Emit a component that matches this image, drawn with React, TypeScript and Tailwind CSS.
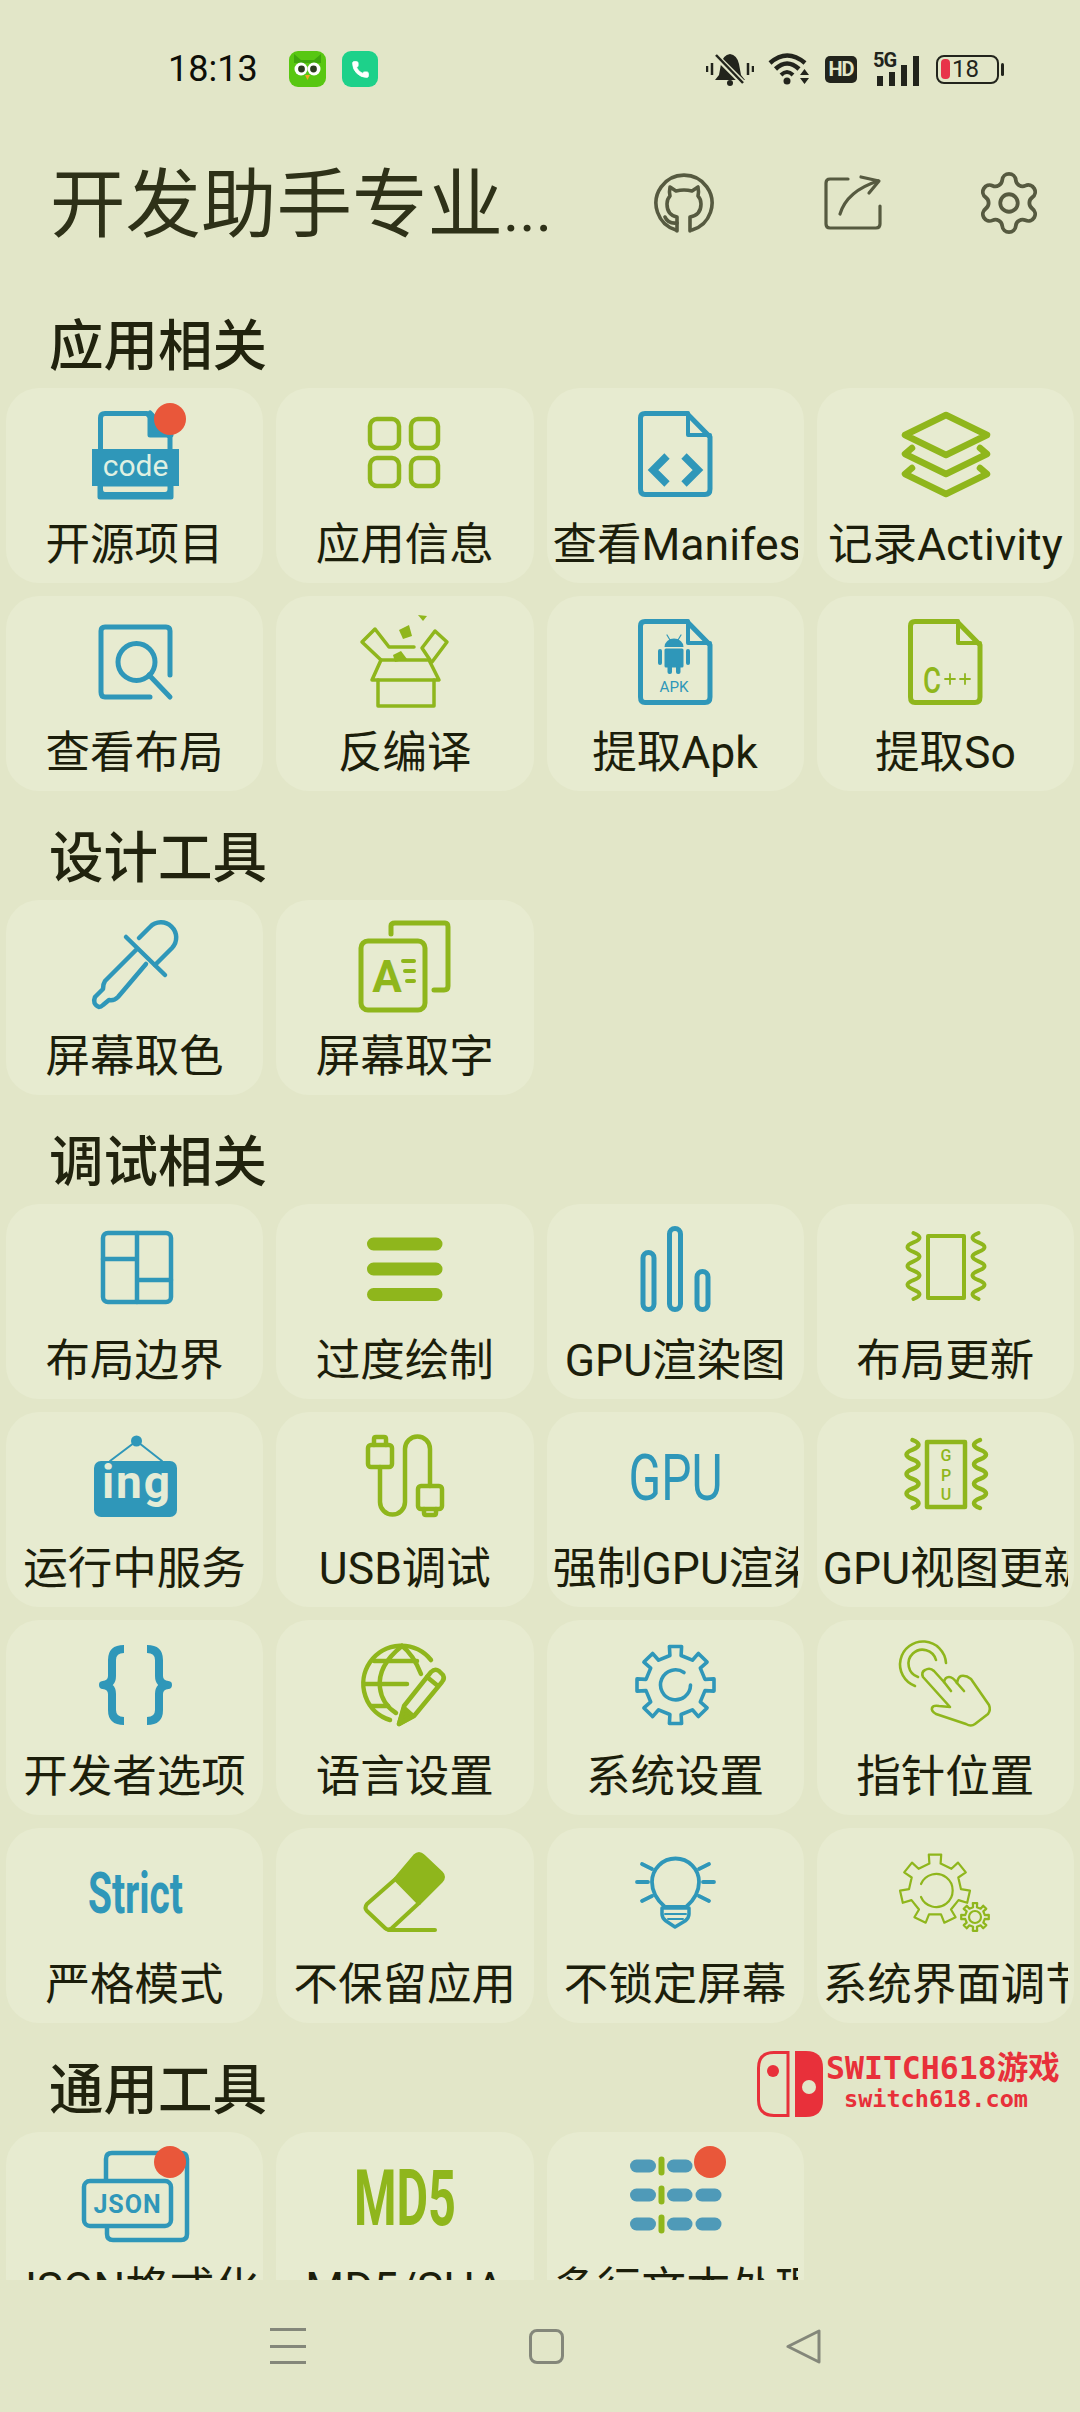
import React from "react";
import { Settings, Phone } from "lucide-react";

const B = "#2f97b9";
const G = "#8fb61c";
const R = "#e9573a";

function gearPath(cx: number, cy: number, ro: number, ri: number, n: number) {
  const pts: string[] = [];
  const step = (Math.PI * 2) / n;
  for (let i = 0; i < n; i++) {
    const a = i * step - Math.PI / 2;
    const w = step * 0.2;
    const w2 = step * 0.24;
    const p = (r: number, t: number) => `${(cx + r * Math.cos(t)).toFixed(1)} ${(cy + r * Math.sin(t)).toFixed(1)}`;
    pts.push(p(ri, a - w2), p(ro, a - w), p(ro, a + w), p(ri, a + w2));
  }
  return "M" + pts.join(" L") + " Z";
}

function wavePath(x: number, y0: number, y1: number, amp: number, n: number, flip = false) {
  const h = (y1 - y0) / n;
  let d = `M${x} ${y0}`;
  for (let i = 0; i < n; i++) {
    const s = (i % 2 === 0 ? 1 : -1) * (flip ? -1 : 1);
    d += ` Q${x + s * amp * 2} ${y0 + h * (i + 0.5)} ${x} ${y0 + h * (i + 1)}`;
  }
  return d;
}

function Ico({ children, color, sw = 5 }: { children: React.ReactNode; color: string; sw?: number }) {
  return (
    <svg viewBox="0 0 100 100" fill="none" stroke={color} strokeWidth={sw} strokeLinecap="round" strokeLinejoin="round" className="w-[100px] h-[100px] overflow-visible shrink-0">
      {children}
    </svg>
  );
}

const Dot = ({ y = 15 }: { y?: number }) => <circle cx="85" cy={y} r="16" fill={R} stroke="none" />;
const T = (p: React.SVGProps<SVGTextElement>) => <text stroke="none" {...p} />;

const FILE = "M20 9.5 H62 L85 33 V85 Q85 90.5 80 90.5 H20 Q15.5 90.5 15.5 85 V14 Q15.5 9.5 20 9.5 Z";

const IconCode = () => (
  <Ico color={B}>
    <path d={FILE} strokeLinejoin="round" />
    <path d="M65 9 V31 H86 L65 9Z" fill={B} />
    <rect x="7" y="45" width="87" height="37" fill={B} stroke="none" />
    <rect x="15" y="80" width="71" height="13" fill="none" strokeWidth="5" strokeLinecap="butt" />
    <T x="50.5" y="71.5" fontSize="30" fill="#dff0e2" textAnchor="middle" fontFamily="Roboto">code</T>
    <Dot />
  </Ico>
);
const IconApps = () => (
  <Ico color={G} sw={4.5}>
    <rect x="15" y="15" width="29" height="29" rx="7" />
    <rect x="56" y="15" width="27" height="29" rx="7" />
    <rect x="15" y="54" width="29" height="28" rx="7" />
    <rect x="56" y="54" width="27" height="28" rx="7" />
  </Ico>
);
const IconManifest = () => (
  <Ico color={B}>
    <path d={FILE} />
    <path d="M63 9 V31 H85" strokeWidth="4" />
    <path d="M42 52 L28 66 L42 80" strokeWidth="7.5" strokeLinecap="butt" strokeLinejoin="miter" />
    <path d="M59 52 L73 66 L59 80" strokeWidth="7.5" strokeLinecap="butt" strokeLinejoin="miter" />
  </Ico>
);
const IconLayers = () => (
  <Ico color={G} sw={6.5}>
    <path d="M51 11 L92 31 L51 51 L10 31 Z" />
    <path d="M17 44 L10 50 L51 70 L92 50 L85 44" />
    <path d="M17 64 L10 70 L51 90 L92 70 L85 64" />
  </Ico>
);
const IconSearch = () => (
  <Ico color={B} sw={5}>
    <path d="M85 63 V19 Q85 15 81 15 H20 Q16 15 16 19 V80 Q16 85 20 85 H65" />
    <circle cx="51.5" cy="50" r="18.5" />
    <path d="M64 63 L85 85" />
  </Ico>
);
const IconBox = () => (
  <Ico color={G} sw={3.5}>
    <path d="M23 68 V94 H79 V68" />
    <path d="M26 48 H74 L84 68 H17 Z" />
    <path d="M26 48 L7 30 L20 17 L34 35 H59" />
    <path d="M75 48 L67 36 L80 19 L92 30 L77 50" />
    <polygon points="44,18 54,13 57,24 48,27" fill={G} stroke="none" />
    <polygon points="63,3 72,4 68,9" fill={G} stroke="none" />
    <polygon points="38,43 46,39 52,47 40,50" fill={G} stroke="none" />
  </Ico>
);
const IconApk = () => (
  <Ico color={B}>
    <path d={FILE} />
    <path d="M63 9 V31 H85" strokeWidth="4" />
    <g fill={B} stroke="none">
      <path d="M39.5 35 A9.5 8.5 0 0 1 58.5 35 Z" />
      <rect x="39.5" y="36.5" width="19" height="19" rx="1.5" />
      <rect x="33" y="37" width="4" height="16" rx="2" />
      <rect x="61" y="37" width="4" height="16" rx="2" />
      <rect x="42.5" y="52" width="4.5" height="10" rx="2" />
      <rect x="51" y="52" width="4.5" height="10" rx="2" />
    </g>
    <path d="M42 23 L45 28 M56 23 L53 28" strokeWidth="1.2" />
    <T x="49" y="80" fontSize="14" fill={B} textAnchor="middle" fontFamily="Roboto" textLength="29" lengthAdjust="spacingAndGlyphs">APK</T>
  </Ico>
);
const IconSo = () => (
  <Ico color={G}>
    <path d={FILE} />
    <path d="M63 9 V31 H85" strokeWidth="4" />
    <T x="28" y="81" fontSize="36" fill={G} fontFamily="Roboto" fontWeight="500" textLength="18" lengthAdjust="spacingAndGlyphs">C</T>
    <path d="M50 67 H60 M55 62 V72 M65 67 H75 M70 62 V72" strokeWidth="1.8" />
  </Ico>
);
const IconDropper = () => (
  <Ico color={B} sw={4.5}>
    <path d="M41 21 L80 59" />
    <path d="M54 22 L65 11 A14.5 14.5 0 0 1 87 32 L70 49" />
    <path d="M52 33 L20 65 Q18 68 18 73 L10 81 Q7 88 14 91 Q16 91 18 89 L24 84 Q29 85 33 81 L61 48" />
  </Ico>
);
const IconCopy = () => (
  <Ico color={G} sw={5}>
    <path d="M36 18 V10 Q36 7 40 7 H90 Q93 7 93 11 V70 Q93 74 89 74 H79" />
    <rect x="6" y="25" width="64" height="69" rx="7" />
    <T x="32" y="76" fontSize="44" fontWeight="700" fill={G} textAnchor="middle" fontFamily="Roboto">A</T>
    <path d="M48 45 H59 M50 55 H59 M52 65 H59" strokeWidth="4" />
  </Ico>
);
const IconBounds = () => (
  <Ico color={B} sw={4.5}>
    <rect x="18" y="13" width="68" height="69" rx="5" />
    <path d="M52 13 V82 M18 39 H52 M52 60 H86" />
  </Ico>
);
const IconOverdraw = () => (
  <Ico color={G} sw={13}>
    <path d="M18.5 24 H81 M18.5 49 H81 M18.5 74.5 H81" />
  </Ico>
);
const IconBars = () => (
  <Ico color={B} sw={5}>
    <rect x="18" y="32.5" width="11" height="57" rx="5.5" />
    <rect x="44.5" y="8.5" width="11" height="81" rx="5.5" />
    <rect x="72" y="51.5" width="11" height="38" rx="5.5" />
  </Ico>
);
const Waves = ({ lx, rx, y0, y1 }: { lx: number; rx: number; y0: number; y1: number }) => (
  <>
    <path d={wavePath(lx, y0, y1, 6, 7)} />
    <path d={wavePath(rx, y0, y1, 6, 7, true)} />
  </>
);
const IconLayoutUpdate = () => (
  <Ico color={G} sw={4}>
    <rect x="33" y="16" width="36" height="62" />
    <Waves lx={18.5} rx={83.5} y0={13} y1={79} />
  </Ico>
);
const IconGpuText = () => (
  <Ico color={B}>
    <T x="3.5" y="72" fontSize="65" fill={B} fontFamily="Roboto" fontWeight="400" textLength="94" lengthAdjust="spacingAndGlyphs">GPU</T>
  </Ico>
);
const IconGpuChip = () => (
  <Ico color={G} sw={4.5}>
    <rect x="32" y="14" width="38" height="65" />
    <Waves lx={17.5} rx={85} y0={12} y1={80} />
    <g fontFamily="Roboto" fontSize="16" fontWeight="500" textAnchor="middle" fill={G}>
      <T x="51" y="32.5">G</T>
      <T x="51" y="52.5">P</T>
      <T x="51" y="72">U</T>
    </g>
  </Ico>
);
const IconIng = () => (
  <Ico color={B} sw={2}>
    <path d="M25 33 L51.5 13 L77 33" />
    <circle cx="51.5" cy="13" r="5.5" fill={B} stroke="none" />
    <rect x="9" y="33" width="83" height="56" rx="7" fill={B} stroke="none" />
    <T x="52" y="70" fontSize="46" fontWeight="700" fill="#e4ecd6" textAnchor="middle" fontFamily="Roboto" letterSpacing="2">ing</T>
  </Ico>
);
const IconUsb = () => (
  <Ico color={G} sw={4.5}>
    <rect x="13" y="17" width="24" height="22" rx="3" />
    <path d="M19 17 V11 Q19 9 21 9 H29 Q31 9 31 11 V17" />
    <path d="M25 39 V74 a12.5 12.5 0 0 0 25 0 V21 a12.5 12.5 0 0 1 25 0 V58" />
    <rect x="63" y="58" width="24" height="23" rx="3" />
    <path d="M69 81 V85 Q69 87 71 87 H79 Q81 87 81 85 V81" />
  </Ico>
);
const IconBraces = () => (
  <Ico color={B} sw={8}>
    <path strokeLinecap="butt" d="M39 13 Q27 13 27 24 V40 Q27 48 18 49 Q27 50 27 58 V74 Q27 85 39 85" />
    <path strokeLinecap="butt" d="M62 13 Q74 13 74 24 V40 Q74 48 83 49 Q74 50 74 58 V74 Q74 85 62 85" />
  </Ico>
);
const IconGlobe = () => (
  <Ico color={G} sw={4.5}>
    <path d="M76 24 A38 38 0 1 0 35 84" />
    <path d="M47 10 Q22 30 25 52 Q27 68 41 77" />
    <path d="M47 10 Q58 18 66 38" />
    <path d="M19 25 H62 M10 48 H52 M16 70 H33" />
    <path d="M44 88 L49 70 L76 36 Q80 32 84 35 L88 39 Q90 43 87 46 L59 80 Z" fill="none" />
    <path d="M44 88 L49 72 L58 80 Z" fill={G} />
    <path d="M72 41 L83 50" />
  </Ico>
);
const IconGearBlue = () => (
  <Ico color={B} sw={3.6}>
    <path d={gearPath(50.5, 49, 39, 30, 8)} />
    <path d="M65.5 49 A15 15 0 1 1 59 36.5" />
  </Ico>
);
const IconHand = () => (
  <Ico color={G} sw={2.6}>
    <path d="M51 27 A23 23 0 1 0 20 50" />
    <path d="M41 24 A14 14 0 1 0 23 41" />
    <path d="M55 71 L28 41 Q26 36 30 34 Q35 31 39 35 L49 46 Q50 41 54 41 Q58 41 62 47 Q63 41 66 40 Q71 39 76 43 L94 69 Q96 74 93 78 L80 88 Q76 91 71 88 L41 78 Q36 75 37 72 Q38 69 44 70 L55 71 Z" />
    <path d="M49 46 L56 55 M62 47 L69 55" />
  </Ico>
);
const IconBulb = () => (
  <Ico color={B} sw={3.8}>
    <path d="M40 63 Q27 52 27 38 A23.5 23.5 0 0 1 74 38 Q74 52 61 63 Z" />
    <path d="M37 64 H64 V70 Q64 74 60 77 L50 83 L41 77 Q37 74 37 70 Z" strokeWidth="3.5" />
    <path d="M40 70 H61 M43 75 H58" strokeWidth="2" />
    <path d="M12 38 H23 M78 38 H89 M17 20 L27 25 M17 57 L27 52 M84 20 L74 25 M84 57 L74 52" />
  </Ico>
);
const IconGears = () => (
  <Ico color={G} sw={2.2}>
    <path d={gearPath(40, 45, 35, 26, 7)} />
    <path d="M26 40 A16.5 16.5 0 1 1 26 53" />
    <path d={gearPath(80, 73, 14, 10, 8)} />
    <circle cx="80" cy="73" r="6" />
  </Ico>
);
const IconStrict = () => (
  <Ico color={B}>
    <T x="3" y="69" fontSize="57" fontWeight="700" fill={B} fontFamily="Roboto" textLength="95" lengthAdjust="spacingAndGlyphs">Strict</T>
  </Ico>
);
const IconEraser = () => (
  <Ico color={G} sw={4}>
    <path d="M60 12 Q64 8 68 12 L86 29 Q90 33 86 37 L64 59 L40.5 35 Z" fill={G} />
    <path d="M40.5 35 L12 60 Q9 64 12 67 L30 84 Q33 87 37 84 L64 59" />
    <path d="M33.5 86 H80" />
  </Ico>
);
const IconJson = () => (
  <Ico color={B} sw={4.5}>
    <path d="M21 31 V11 Q21 5 27 5 H96 Q102 5 102 11 V86 Q102 92 96 92 H28 Q22 92 22 86 V80" />
    <rect x="-1" y="33" width="87" height="45" rx="6" />
    <T x="42.5" y="65" fontSize="25" fontWeight="700" fill={B} textAnchor="middle" fontFamily="Roboto" letterSpacing="1">JSON</T>
    <Dot y={14} />
  </Ico>
);
const IconMd5 = () => (
  <Ico color={G}>
    <T x="-1" y="76.5" fontSize="78" fontWeight="700" fill={G} fontFamily="Roboto" textLength="102" lengthAdjust="spacingAndGlyphs">MD5</T>
  </Ico>
);
const IconMulti = () => (
  <Ico color="#4f9ab8">
    {[18, 47, 76].map((y) => (
      <g key={y} stroke="none">
        <rect x="5" y={y - 6.5} width="26" height="13" rx="6.5" fill="#4f9ab8" />
        <rect x="42" y={y - 6.5} width="25.5" height="13" rx="6.5" fill="#4f9ab8" />
        {y !== 18 && <rect x="70.5" y={y - 6.5} width="26" height="13" rx="6.5" fill="#4f9ab8" />}
        <rect x="33.5" y={y - 9.5} width="6" height="19" rx="3" fill={G} />
      </g>
    ))}
    <Dot y={14} />
  </Ico>
);

type Item = [string, React.FC];
const sections: [string, Item[]][] = [
  ["应用相关", [
    ["开源项目", IconCode], ["应用信息", IconApps], ["查看Manifest", IconManifest], ["记录Activity", IconLayers],
    ["查看布局", IconSearch], ["反编译", IconBox], ["提取Apk", IconApk], ["提取So", IconSo],
  ]],
  ["设计工具", [["屏幕取色", IconDropper], ["屏幕取字", IconCopy]]],
  ["调试相关", [
    ["布局边界", IconBounds], ["过度绘制", IconOverdraw], ["GPU渲染图", IconBars], ["布局更新", IconLayoutUpdate],
    ["运行中服务", IconIng], ["USB调试", IconUsb], ["强制GPU渲染", IconGpuText], ["GPU视图更新", IconGpuChip],
    ["开发者选项", IconBraces], ["语言设置", IconGlobe], ["系统设置", IconGearBlue], ["指针位置", IconHand],
    ["严格模式", IconStrict], ["不保留应用", IconEraser], ["不锁定屏幕", IconBulb], ["系统界面调节", IconGears],
  ]],
  ["通用工具", [["JSON格式化", IconJson], ["MD5/SHA", IconMd5], ["多行文本处理", IconMulti]]],
];

function Card({ label, Icon }: { label: string; Icon: React.FC }) {
  return (
    <div className="flex flex-col items-center pt-[16px] rounded-[33px] bg-[#e7ebd0] min-w-0">
      <Icon />
      <div className="mt-[12px] self-stretch mx-[6px] text-center text-[44.5px] leading-[58px] text-[#1c1e0b] whitespace-nowrap overflow-hidden">{label}</div>
    </div>
  );
}

function StatusBar() {
  const ink = "#22241c";
  return (
    <div className="h-[130px] pt-[51px] pl-[168px] shrink-0">
      <div className="flex items-center h-[36px]">
        <span className="text-[36px] leading-[36px] text-[#0e0f08] w-[92px]">18:13</span>
        <div className="ml-[29px] w-[37px] h-[36px] rounded-[9px] bg-[#58c712] flex items-center justify-center">
          <svg viewBox="0 0 37 36" className="w-[37px] h-[36px]">
            <path d="M5 3 L12 9 H25 L32 3 V12 H5Z" fill="#3fa60d" />
            <circle cx="12" cy="18" r="6.5" fill="#fff" />
            <circle cx="25" cy="18" r="6.5" fill="#fff" />
            <circle cx="12.5" cy="18" r="3.4" fill="#2c3a20" />
            <circle cx="24.5" cy="18" r="3.4" fill="#2c3a20" />
            <path d="M16 24 H21 L18.5 29Z" fill="#f5a623" />
          </svg>
        </div>
        <div className="ml-[16px] w-[36px] h-[36px] rounded-[9px] bg-[#1dd18a] flex items-center justify-center">
          <Phone size={19} color="#fff" fill="#fff" strokeWidth={1} />
        </div>
        <svg viewBox="0 0 48 34" className="ml-[328px] w-[48px] h-[34px]">
          <path d="M24 2 Q31 3 33 12 L35 23 L39 28 H9 L13 23 L15 12 Q17 3 24 2Z" fill={ink} />
          <circle cx="24" cy="31" r="3" fill={ink} />
          <path d="M9 3 L38 32" stroke="#e2e6c8" strokeWidth="6" />
          <path d="M10 3 L37 31" stroke={ink} strokeWidth="2.5" />
          <path d="M1 14 V20 M6 11 V23 M42 11 V23 M47 14 V20" stroke={ink} strokeWidth="2.5" />
        </svg>
        <svg viewBox="0 0 45 34" className="ml-[14px] w-[45px] h-[34px]">
          <path d="M2 11 Q19 -4 37 11" stroke={ink} strokeWidth="4.5" fill="none" />
          <path d="M7.5 17 Q19 6 31 17" stroke={ink} strokeWidth="4.5" fill="none" />
          <path d="M13 23 Q19 17 25 23" stroke={ink} strokeWidth="4" fill="none" />
          <circle cx="19" cy="29" r="3.5" fill={ink} />
          <path d="M32 23 L36.5 17 L41 23Z M32 26 H41 L36.5 32Z" fill={ink} />
        </svg>
        <div className="ml-[12px] w-[32px] h-[27px] rounded-[5px] bg-[#22241c] text-[#e2e6c8] text-[20px] leading-[27px] font-bold text-center tracking-[-1px] font-[Roboto]">HD</div>
        <div className="ml-[16px] relative w-[47px] h-[33px]">
          <span className="absolute left-0 top-[-3px] text-[20px] leading-[20px] font-bold text-[#22241c] tracking-[-1px]">5G</span>
          <div className="absolute bottom-0 left-[4px] flex items-end gap-[6px]">
            <div className="w-[6px] h-[10px] bg-[#22241c]" />
            <div className="w-[6px] h-[14px] bg-[#22241c]" />
            <div className="w-[6px] h-[21px] bg-[#22241c]" />
            <div className="w-[6px] h-[30px] bg-[#22241c]" />
          </div>
        </div>
        <div className="ml-[16px] relative flex items-center w-[63px] h-[29px] rounded-[8px] border-[2.5px] border-[#22241c]">
          <div className="ml-[3px] w-[9px] h-[20px] rounded-[4px] bg-[#e8334a]" />
          <span className="ml-[2px] text-[24px] leading-[24px] text-[#22241c]">18</span>
        </div>
        <div className="ml-[2px] w-[3px] h-[13px] rounded-[2px] bg-[#22241c]" />
      </div>
    </div>
  );
}

function AppBar() {
  const c = "#565a40";
  return (
    <div className="h-[149px] shrink-0 flex items-center pl-[50px]">
      <h1 className="mt-[5px] text-[75.5px] leading-[90px] text-[#2e3118] whitespace-nowrap w-[602px] font-normal">
        开发助手专业<span className="text-[62px]">...</span>
      </h1>
      <svg viewBox="0 0 64 64" fill="none" stroke={c} strokeWidth="3.6" strokeLinecap="round" strokeLinejoin="round" className="mb-[4px] w-[64px] h-[64px]">
        <path d="M24 59 A28 28 0 1 1 40 59" />
        <path d="M25 60 V46 Q15 44 15 33 Q15 28 18 25 Q17 21 18 16 L24 20 Q32 18 40 20 L46 16 Q47 21 46 25 Q49 28 49 33 Q49 44 38 46 V60" />
        <path d="M25 52 Q16 53 13 46" />
      </svg>
      <svg viewBox="0 0 64 64" fill="none" stroke={c} strokeWidth="3.2" strokeLinecap="round" strokeLinejoin="round" className="mb-[4px] ml-[105px] w-[64px] h-[64px]">
        <path d="M27 8 H9 Q5 8 5 12 V53 Q5 57 9 57 H55 Q59 57 59 53 V35" />
        <path d="M19 43 Q26 20 57 10" />
        <path d="M40 6 L58 10 L48 22" />
      </svg>
      <div className="mb-[4px] ml-[89px] w-[70px] h-[70px]">
        <Settings size={70} color={c} strokeWidth={1.3} />
      </div>
    </div>
  );
}

function NavBar() {
  const c = "#84877a";
  return (
    <div className="h-[132px] shrink-0 flex items-center pl-[270px] pr-[259px] justify-between bg-[#e2e6c8]">
      <div className="w-[36px] h-[36px] flex flex-col justify-between">
        <div className="h-[3px] bg-[#84877a]" />
        <div className="h-[3px] bg-[#84877a]" />
        <div className="h-[3px] bg-[#84877a]" />
      </div>
      <div className="w-[35px] h-[35px] rounded-[8px] border-[3px] border-[#84877a]" />
      <svg viewBox="0 0 35 35" fill="none" stroke={c} strokeWidth="3" strokeLinejoin="round" className="w-[35px] h-[35px]">
        <path d="M2 17.5 L33 2 V33 Z" />
      </svg>
    </div>
  );
}

function Watermark() {
  const red = "#e8303a";
  return (
    <div className="absolute left-[757px] top-[2051px] flex items-start">
      <svg viewBox="0 0 66 66" className="w-[66px] h-[66px]">
        <path d="M31 1.5 H17 Q1.5 1.5 1.5 17 V49 Q1.5 64.5 17 64.5 H31 Z" fill="none" stroke={red} strokeWidth="3" />
        <circle cx="16" cy="20" r="6" fill={red} />
        <path d="M38 0 H49 Q66 0 66 17 V49 Q66 66 49 66 H38 Z" fill={red} />
        <circle cx="52" cy="36" r="7" fill="#e2e6c8" />
      </svg>
      <div className="ml-[3px] flex flex-col items-start font-['DejaVu_Sans_Mono','Noto_Sans_CJK_SC',monospace] font-bold text-[#e8303a]">
        <span className="text-[31.5px] leading-[34px] whitespace-nowrap">SWITCH618游戏</span>
        <span className="ml-[18px] mt-[2px] text-[23.5px] leading-[24px] whitespace-nowrap">switch618.com</span>
      </div>
    </div>
  );
}

export default function App() {
  return (
    <div lang="zh-CN" className="relative w-[1080px] h-[2412px] flex flex-col overflow-hidden bg-[#e2e6c8] font-[Roboto,'Noto_Sans_CJK_SC',sans-serif]">
      <StatusBar />
      <AppBar />
      <div className="flex-1 min-h-0 overflow-hidden">
        {sections.map(([title, items]) => (
          <section key={title}>
            <div className="h-[109px] pt-[43px] pl-[49px]">
              <h2 className="text-[54.5px] leading-[48px] font-medium text-[#21230e]">{title}</h2>
            </div>
            <div className="grid grid-cols-4 auto-rows-[195px] gap-[13px] px-[6px]">
              {items.map(([label, Icon]) => (
                <Card key={label} label={label} Icon={Icon} />
              ))}
            </div>
          </section>
        ))}
      </div>
      <NavBar />
      <Watermark />
    </div>
  );
}
